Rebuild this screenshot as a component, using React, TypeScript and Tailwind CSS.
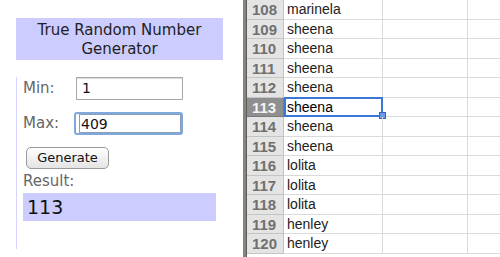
import React from "react";

const rows = [
  { n: 108, name: "marinela" },
  { n: 109, name: "sheena" },
  { n: 110, name: "sheena" },
  { n: 111, name: "sheena" },
  { n: 112, name: "sheena" },
  { n: 113, name: "sheena" },
  { n: 114, name: "sheena" },
  { n: 115, name: "sheena" },
  { n: 116, name: "lolita" },
  { n: 117, name: "lolita" },
  { n: 118, name: "lolita" },
  { n: 119, name: "henley" },
  { n: 120, name: "henley" },
];

const selected = 113;

export default function App() {
  return (
    <div className="w-[500px] h-[257px] bg-white flex overflow-hidden font-['DejaVu_Sans',sans-serif]">
      {/* Generator widget */}
      <div className="w-[243px] shrink-0">
        <div className="ml-[16px] mt-[18px] w-[207px]">
          <div className="h-[42px] bg-[#ccccff] pt-[3px] text-center text-[15px] leading-[19px] text-[#222]">
            True Random Number
            <br />
            Generator
          </div>
          <div className="h-[172px] border-l border-[#d4d4ff] pl-[6px]">
            <div className="mt-[17px] flex items-center">
              <span className="w-[53px] text-[15px] text-[#666]">Min:</span>
              <div className="w-[107px] h-[23px] border border-[#a8a8a8] shadow-[inset_0_1px_1px_rgba(0,0,0,0.15)] pl-[5px] text-[14px] leading-[21px] text-[#111]">
                1
              </div>
            </div>
            <div className="mt-[12px] flex items-center">
              <span className="w-[51px] text-[15px] text-[#666]">Max:</span>
              <div className="w-[109px] h-[23px] rounded-[3px] border-2 border-[#7fa9dc] pl-[3px] text-[14px] leading-[19px] text-[#111]">
                <div className="h-full border border-[#8b9fb8] pl-[1px]">409</div>
              </div>
            </div>
            <div className="mt-[12px] ml-[3px] w-[83px] h-[22px] rounded-[5px] border border-[#9a9a9a] bg-gradient-to-b from-white to-[#e4e4e4] text-center text-[13px] leading-[20px] text-[#111]">
              Generate
            </div>
            <div className="mt-[3px] text-[15px] leading-[18px] text-[#666]">Result:</div>
            <div className="mt-[3px] w-[193px] h-[28px] bg-[#ccccff] pl-[4px] text-[19px] leading-[28px] text-[#111]">
              113
            </div>
          </div>
        </div>
      </div>

      {/* Spreadsheet */}
      <div className="flex-1 flex">
        <div className="w-[4px] bg-[#87837e] border-r border-[#5f5c58]" />
        <div className="flex-1 flex flex-col font-['Liberation_Sans',sans-serif]">
          {rows.map((r) => {
            const sel = r.n === selected;
            return (
              <div key={r.n} className="h-[19.5px] flex shrink-0">
                <div
                  className={
                    sel
                      ? "w-[37px] border-r border-b border-[#7a7a7a] bg-[#8f8f8f] pl-[5px] text-[15px] font-bold leading-[19px] text-[#f4f4f4]"
                      : "w-[37px] border-r border-b border-[#c4c4c4] bg-[#e4e4e4] pl-[5px] text-[15px] font-bold leading-[19px] text-[#707070]"
                  }
                >
                  {r.n}
                </div>
                <div
                  className={
                    sel
                      ? "relative w-[99px] border-r border-b border-[#dadada] pl-[3px] text-[14px] leading-[19px] text-black"
                      : "relative w-[99px] border-r border-b border-[#dadada] pl-[3px] text-[14px] leading-[19px] text-[#222]"
                  }
                >
                  {r.name}
                  {sel && (
                    <>
                      <div className="absolute left-0 top-[-1px] w-[99px] h-[20px] border-2 border-[#3a78d8]" />
                      <div className="absolute right-[-4px] bottom-[-3px] w-[7px] h-[7px] bg-[#6b9be6] border border-[#2f66c4]" />
                    </>
                  )}
                </div>
                <div className="w-[85px] border-r border-b border-[#dadada]" />
                <div className="flex-1 border-b border-[#dadada]" />
              </div>
            );
          })}
        </div>
      </div>
    </div>
  );
}
